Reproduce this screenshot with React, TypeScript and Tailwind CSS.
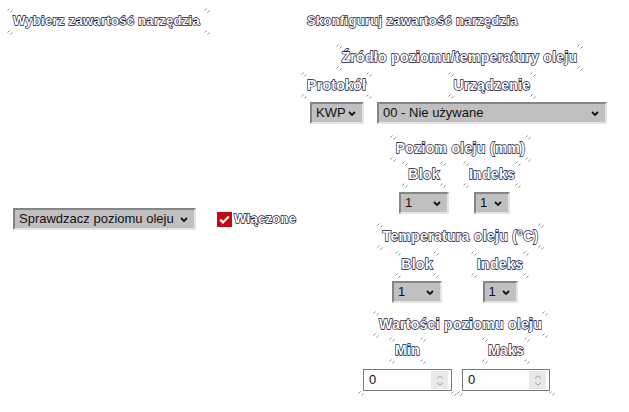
import React from "react";

const Mark = ({ className }: { className: string }) => (
  <svg width="6" height="6" viewBox="0 0 6 6" className={"absolute pointer-events-none " + className}>
    <path d="M0.5 3.5 L2.5 1.5 M3.5 5.5 L5.5 3.5" stroke="#8a8a8a" strokeWidth="1" fill="none" />
  </svg>
);

const Marks = () => (
  <>
    <Mark className="-left-[6px] -top-[6px]" />
    <Mark className="-right-[6px] -top-[6px]" />
    <Mark className="-left-[6px] -bottom-[6px]" />
    <Mark className="-right-[6px] -bottom-[6px]" />
  </>
);

const base =
  "font-bold leading-[16px] tracking-[0.3px] text-white whitespace-nowrap [-webkit-text-stroke:1.3px_#101038] [paint-order:stroke_fill]";
const lbl = base + " text-[13px]";
const lbl14 = base + " text-[14px]";

const Chevron = () => (
  <svg width="8" height="5" viewBox="0 0 8 5" className="shrink-0">
    <path d="M1 1 L4 4 L7 1" stroke="#111" strokeWidth="1.8" fill="none" />
  </svg>
);

const Select = ({ text, className }: { text: string; className: string }) => (
  <div
    className={
      "relative flex items-center justify-between bg-[#c0c0c0] border-2 border-t-[#858585] border-l-[#858585] border-b-[#e4e4e4] border-r-[#e4e4e4] pl-[4px] pr-[6px] text-[13px] text-[#111] " +
      className
    }
  >
    <span className="whitespace-nowrap">{text}</span>
    <Chevron />
  </div>
);

const NumInput = () => (
  <div className="relative flex items-center justify-between w-full h-[22px] bg-white border border-[#7a7a7a] pl-[5px] pr-[3px] text-[13px] text-[#111]">
    <span>0</span>
    <div className="w-[17px] h-[18px] bg-[#e9e9ea] flex flex-col items-center justify-center gap-[3px]">
      <svg width="8" height="4" viewBox="0 0 8 4"><path d="M1 3.5 L4 0.8 L7 3.5" stroke="#9d9d9d" strokeWidth="1" fill="none" /></svg>
      <svg width="8" height="4" viewBox="0 0 8 4"><path d="M1 0.5 L4 3.2 L7 0.5" stroke="#9d9d9d" strokeWidth="1" fill="none" /></svg>
    </div>
    <Mark className="-left-[6px] -bottom-[6px]" />
    <Mark className="-right-[6px] -bottom-[6px]" />
  </div>
);

const Label = ({ children, className = "", small = false }: { children: React.ReactNode; className?: string; small?: boolean }) => (
  <div className={"relative " + (small ? lbl : lbl14) + " " + className}>
    {children}
    <Marks />
  </div>
);

export default function App() {
  return (
    <div className="w-[629px] h-[412px] bg-white flex font-['Liberation_Sans',Arial,sans-serif] overflow-hidden">
      {/* left column */}
      <div className="w-[307px] shrink-0 flex flex-col pl-[13px] pt-[13px]">
        <Label small className="self-start pr-[4px]">Wybierz zawartość narzędzia</Label>
        <div className="mt-[179px] flex items-center">
          <Select text="Sprawdzacz poziomu oleju" className="w-[183px] h-[22px]" />
          <div className="ml-[21px] w-[15px] h-[15px] bg-[#c4080f] flex items-center justify-center">
            <svg width="11" height="9" viewBox="0 0 11 9">
              <path d="M1.2 4.6 L4 7.4 L9.8 1.4" stroke="#fff" strokeWidth="2.2" fill="none" />
            </svg>
          </div>
          <span className={lbl + " ml-[2px]"}>Włączone</span>
        </div>
      </div>

      {/* right column */}
      <div className="w-[305px] shrink-0 flex flex-col pt-[13px]">
        <div className={"relative self-start " + lbl}>
          Skonfiguruj zawartość narzędzia
        </div>

        <Label className="mt-[20px] self-center ml-[0px]">Źródło poziomu/temperatury oleju</Label>

        <div className="mt-[12px] flex">
          <div className="w-[62px] flex flex-col items-start">
            <Label>Protokół</Label>
            <Select text="KWP" className="mt-[9px] w-[54px] h-[22px] ml-[3px] pl-[4px] pr-[6px]" />
          </div>
          <div className="ml-[3px] w-[240px] flex flex-col items-center">
            <Label>Urządzenie</Label>
            <Select text="00 - Nie używane" className="mt-[9px] w-[230px] h-[22px] ml-[0px]" />
          </div>
        </div>

        <Label className="mt-[16px] self-center ml-[2px]">Poziom oleju (mm)</Label>
        <div className="mt-[10px] ml-[85px] flex gap-[4px]">
          <div className="w-[64px] flex flex-col items-center">
            <Label>Blok</Label>
            <Select text="1" className="mt-[10px] w-[50px] h-[22px]" />
          </div>
          <div className="w-[64px] flex flex-col items-center">
            <Label>Indeks</Label>
            <Select text="1" className="mt-[10px] w-[36px] h-[22px]" />
          </div>
        </div>

        <Label className="mt-[14px] self-center ml-[2px]">Temperatura oleju (°C)</Label>
        <div className="mt-[12px] ml-[70px] flex gap-[3px]">
          <div className="w-[80px] flex flex-col items-center">
            <Label>Blok</Label>
            <Select text="1" className="mt-[9px] w-[50px] h-[22px]" />
          </div>
          <div className="w-[80px] flex flex-col items-center">
            <Label>Indeks</Label>
            <Select text="1" className="mt-[9px] w-[35px] h-[22px]" />
          </div>
        </div>

        <Label className="mt-[13px] self-center ml-[2px]">Wartości poziomu oleju</Label>
        <div className="mt-[10px] ml-[56px] flex gap-[10px]">
          <div className="w-[89px] flex flex-col items-center">
            <Label>Min</Label>
            <div className="mt-[11px] w-full"><NumInput /></div>
          </div>
          <div className="w-[88px] flex flex-col items-center">
            <Label>Maks</Label>
            <div className="mt-[11px] w-full"><NumInput /></div>
          </div>
        </div>
      </div>
    </div>
  );
}
